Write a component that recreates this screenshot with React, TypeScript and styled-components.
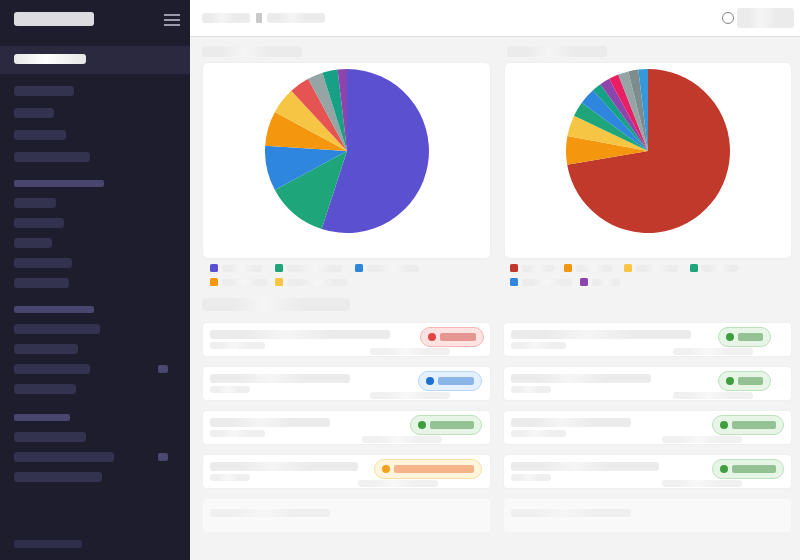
import React from "react";
import styled, { createGlobalStyle, css } from "styled-components";

const Global = createGlobalStyle`
  html, body, #root { margin: 0; padding: 0; height: 100%; }
  body { font-family: Inter, "Liberation Sans", sans-serif; background: #f3f3f3; }
  * { box-sizing: border-box; }
`;

const shimmer = css`
  background: linear-gradient(90deg, #ebebeb 20%, #f5f5f5 42%, #ebebeb 68%);
  border-radius: 3px;
`;

const Shell = styled.div`
  display: flex;
  width: 800px;
  height: 560px;
  overflow: hidden;
`;

/* ---------- Sidebar ---------- */
const Sidebar = styled.aside`
  width: 190px;
  flex-shrink: 0;
  background: #1e1d2e;
  display: flex;
  flex-direction: column;
`;

const Brand = styled.div`
  height: 46px;
  display: flex;
  align-items: flex-start;
  justify-content: space-between;
  padding: 12px 10px 0 14px;
`;

const Logo = styled.div`
  width: 80px;
  height: 14px;
  border-radius: 3px;
  background: #dcdce0;
`;

const Burger = styled.div`
  margin-top: 2px;
  width: 16px;
  display: flex;
  flex-direction: column;
  gap: 3px;
  span {
    display: block;
    height: 2px;
    background: #9b9aa8;
  }
`;

const ActiveRow = styled.div`
  height: 28px;
  background: #2a293f;
  padding: 8px 14px 0;
`;

const ActiveBar = styled.div`
  width: 72px;
  height: 10px;
  border-radius: 3px;
  background: linear-gradient(90deg, #e8e8e8 0%, #ffffff 45%, #e6e6e6 100%);
`;

const NavGroup = styled.div<{ $mt: number; $gap: number }>`
  margin-top: ${(p) => p.$mt}px;
  display: flex;
  flex-direction: column;
  gap: ${(p) => p.$gap}px;
`;

const SectionHead = styled.div<{ $w: number; $mt: number }>`
  width: ${(p) => p.$w}px;
  height: 7px;
  margin: ${(p) => p.$mt}px 0 11px 14px;
  border-radius: 2px;
  background: #48466f;
`;

const NavItemRow = styled.div`
  display: flex;
  align-items: center;
  justify-content: space-between;
  padding: 0 22px 0 14px;
`;

const NavBar = styled.div<{ $w: number }>`
  width: ${(p) => p.$w}px;
  height: 10px;
  border-radius: 3px;
  background: #33324f;
`;

const NavBadge = styled.div`
  width: 10px;
  height: 8px;
  border-radius: 2px;
  background: #4a4870;
`;

const SideFooter = styled.div`
  margin: auto 0 12px 14px;
  width: 68px;
  height: 8px;
  border-radius: 2px;
  background: #2f2e4a;
`;

/* ---------- Main ---------- */
const Main = styled.main`
  flex: 1;
  display: flex;
  flex-direction: column;
  background: #f3f3f3;
  min-width: 0;
`;

const Topbar = styled.header`
  height: 37px;
  flex-shrink: 0;
  background: #ffffff;
  border-bottom: 1px solid #e0e0e0;
  display: flex;
  align-items: center;
  padding: 0 6px 1px 12px;
`;

const Crumb = styled.div<{ $w: number }>`
  ${shimmer}
  width: ${(p) => p.$w}px;
  height: 10px;
`;

const CrumbSep = styled.div`
  width: 6px;
  height: 10px;
  margin: 0 5px 0 6px;
  border-radius: 1px;
  background: #c9c9c9;
`;

const TopRight = styled.div`
  margin-left: auto;
  display: flex;
  align-items: center;
  gap: 3px;
`;

const Ring = styled.div`
  width: 12px;
  height: 12px;
  border-radius: 50%;
  border: 1.5px solid #858585;
`;

const UserBox = styled.div`
  ${shimmer}
  width: 57px;
  height: 20px;
`;

const Content = styled.div`
  display: grid;
  grid-template-columns: 289px 289px;
  column-gap: 12px;
  padding: 9px 8px 0 12px;
  align-items: start;
`;

const Block = styled.section`
  display: flex;
  flex-direction: column;
`;

const BlockTitle = styled.div<{ $w: number; $ml?: number }>`
  ${shimmer}
  width: ${(p) => p.$w}px;
  height: 11px;
  margin-left: ${(p) => p.$ml ?? 0}px;
`;

const ChartCard = styled.div<{ $ml: number }>`
  margin-top: 5px;
  margin-left: ${(p) => p.$ml}px;
  height: 197px;
  background: #ffffff;
  border: 1px solid #efefef;
  border-radius: 6px;
  box-shadow: 0 1px 2px rgba(0, 0, 0, 0.025);
  display: flex;
  justify-content: center;
  padding-top: 6px;
`;

const Legend = styled.div<{ $pl: number }>`
  margin-top: 5px;
  padding-left: ${(p) => p.$pl}px;
  display: flex;
  flex-direction: column;
  gap: 6px;
`;

const LegendRow = styled.div`
  display: flex;
`;

const LegendItem = styled.div<{ $w?: number }>`
  display: flex;
  align-items: center;
  gap: 4px;
  width: ${(p) => (p.$w ? `${p.$w}px` : "auto")};
  flex-shrink: 0;
`;

const Swatch = styled.span<{ $c: string }>`
  width: 8px;
  height: 8px;
  border-radius: 1.5px;
  background: ${(p) => p.$c};
`;

const LegendLabel = styled.span<{ $w: number }>`
  background: linear-gradient(90deg, #ececec 20%, #f6f6f6 50%, #ececec 80%);
  width: ${(p) => p.$w}px;
  height: 7px;
  border-radius: 2px;
`;

const SectionTitle = styled.div`
  ${shimmer}
  margin-top: 12px;
  width: 148px;
  height: 13px;
`;

const List = styled.div`
  margin-top: 11px;
  display: flex;
  flex-direction: column;
  gap: 9px;
`;

const Row = styled.div<{ $faded?: boolean }>`
  height: 35px;
  display: flex;
  align-items: flex-start;
  padding-left: 7px;
  border-radius: 4px;
  border: 1px solid ${(p) => (p.$faded ? "#f3f3f3" : "#efefef")};
  background: ${(p) => (p.$faded ? "#f9f9f9" : "#ffffff")};
`;

const Info = styled.div<{ $pt?: number }>`
  flex: 1;
  min-width: 0;
  display: flex;
  flex-direction: column;
  gap: 3px;
  padding-top: ${(p) => p.$pt ?? 7}px;
`;

const RowTitle = styled.div<{ $w: number; $faded?: boolean }>`
  ${shimmer}
  ${(p) =>
    p.$faded &&
    css`
      background: linear-gradient(90deg, #f0f0f0 20%, #f6f6f6 45%, #efefef 70%);
    `}
  width: ${(p) => p.$w}px;
  height: ${(p) => (p.$faded ? 8 : 9)}px;
  flex-shrink: 0;
`;

const RowSub = styled.div<{ $w: number }>`
  background: linear-gradient(90deg, #efefef 20%, #f7f7f7 45%, #efefef 70%);
  border-radius: 3px;
  width: ${(p) => p.$w}px;
  height: 7px;
`;

const Side = styled.div`
  display: flex;
  flex-direction: column;
  align-items: flex-end;
  padding-top: 4px;
`;

const tones = {
  red: { bg: "#fde2e2", border: "#f6b6b6", dot: "#e04646", bar: "#e59690" },
  blue: { bg: "#e4f0fd", border: "#b8d6f5", dot: "#1e6fd2", bar: "#8bb5e6" },
  green: { bg: "#e7f5e7", border: "#bde0bd", dot: "#3f9f3f", bar: "#94c294" },
  orange: { bg: "#fff5dc", border: "#f6e0a4", dot: "#f4a11e", bar: "#f5b489" },
};
type Tone = keyof typeof tones;

const Badge = styled.div<{ $tone: Tone; $mr: number }>`
  height: 20px;
  margin-right: ${(p) => p.$mr}px;
  padding: 0 7px;
  display: flex;
  align-items: center;
  gap: 4px;
  border-radius: 10px;
  background: ${(p) => tones[p.$tone].bg};
  border: 1px solid ${(p) => tones[p.$tone].border};
`;

const Dot = styled.span<{ $tone: Tone }>`
  width: 8px;
  height: 8px;
  border-radius: 50%;
  background: ${(p) => tones[p.$tone].dot};
`;

const BadgeBar = styled.span<{ $tone: Tone; $w: number }>`
  width: ${(p) => p.$w}px;
  height: 8px;
  border-radius: 2px;
  background: ${(p) => tones[p.$tone].bar};
`;

const DateBar = styled.div<{ $mr: number }>`
  background: linear-gradient(90deg, #f0f0f0 20%, #f8f8f8 45%, #f0f0f0 70%);
  border-radius: 3px;
  margin-top: 1px;
  margin-right: ${(p) => p.$mr}px;
  width: 80px;
  height: 7px;
`;

/* ---------- Pie ---------- */
type Slice = { deg: number; color: string };

function Pie({ slices }: { slices: Slice[] }) {
  const c = 82;
  const r = 82;
  let acc = 0;
  const pt = (a: number) => {
    const rad = (a * Math.PI) / 180;
    return [c + r * Math.sin(rad), c - r * Math.cos(rad)];
  };
  return (
    <svg width={164} height={164} viewBox="0 0 164 164">
      {slices.map((s, i) => {
        const a0 = acc;
        const a1 = acc + s.deg;
        acc = a1;
        const [x0, y0] = pt(a0);
        const [x1, y1] = pt(a1);
        const large = s.deg > 180 ? 1 : 0;
        return (
          <path
            key={i}
            d={`M${c} ${c} L${x0.toFixed(2)} ${y0.toFixed(2)} A${r} ${r} 0 ${large} 1 ${x1.toFixed(2)} ${y1.toFixed(2)} Z`}
            fill={s.color}
          />
        );
      })}
    </svg>
  );
}

const pieA: Slice[] = [
  { deg: 198, color: "#5b50cf" },
  { deg: 43.6, color: "#1fa57a" },
  { deg: 32.1, color: "#2e86de" },
  { deg: 24.7, color: "#f5960f" },
  { deg: 18.8, color: "#f6c544" },
  { deg: 14.5, color: "#e55353" },
  { deg: 10.9, color: "#95a5a6" },
  { deg: 10.8, color: "#16a085" },
  { deg: 6.6, color: "#8e44ad" },
];

const pieB: Slice[] = [
  { deg: 260.3, color: "#c0392b" },
  { deg: 20.3, color: "#f5960f" },
  { deg: 14.9, color: "#f6c544" },
  { deg: 10.6, color: "#1fa57a" },
  { deg: 11.7, color: "#2e86de" },
  { deg: 6.7, color: "#16a085" },
  { deg: 7.2, color: "#8e44ad" },
  { deg: 7.0, color: "#e91e63" },
  { deg: 7.4, color: "#95a5a6" },
  { deg: 7.1, color: "#7f8c8d" },
  { deg: 6.8, color: "#3498db" },
];

type LegendDef = { c: string; w: number; iw?: number }[][];

const legendA: LegendDef = [
  [
    { c: "#5b50cf", w: 40, iw: 65 },
    { c: "#1fa57a", w: 55, iw: 80 },
    { c: "#2e86de", w: 52 },
  ],
  [
    { c: "#f5960f", w: 45, iw: 65 },
    { c: "#f6c544", w: 60 },
  ],
];

const legendB: LegendDef = [
  [
    { c: "#c0392b", w: 32, iw: 54 },
    { c: "#f5960f", w: 36, iw: 60 },
    { c: "#f6c544", w: 42, iw: 66 },
    { c: "#1fa57a", w: 36 },
  ],
  [
    { c: "#2e86de", w: 50, iw: 70 },
    { c: "#8e44ad", w: 28 },
  ],
];

type RowDef = {
  title: number;
  sub: number;
  tone: Tone;
  bar: number;
  bmr: number;
  dmr: number;
};

const rowsA: RowDef[] = [
  { title: 180, sub: 55, tone: "red", bar: 36, bmr: 6, dmr: 40 },
  { title: 140, sub: 40, tone: "blue", bar: 36, bmr: 8, dmr: 40 },
  { title: 120, sub: 55, tone: "green", bar: 44, bmr: 8, dmr: 48 },
  { title: 148, sub: 40, tone: "orange", bar: 80, bmr: 8, dmr: 52 },
];

const rowsB: RowDef[] = [
  { title: 180, sub: 55, tone: "green", bar: 25, bmr: 20, dmr: 38 },
  { title: 140, sub: 40, tone: "green", bar: 25, bmr: 20, dmr: 38 },
  { title: 120, sub: 55, tone: "green", bar: 44, bmr: 7, dmr: 49 },
  { title: 148, sub: 40, tone: "green", bar: 44, bmr: 7, dmr: 49 },
];

function ChartBlock({
  slices,
  legend,
  titleMl,
  cardMl,
  legendPl,
}: {
  slices: Slice[];
  legend: LegendDef;
  titleMl: number;
  cardMl: number;
  legendPl: number;
}) {
  return (
    <Block>
      <BlockTitle $w={100} $ml={titleMl} />
      <ChartCard $ml={cardMl}>
        <Pie slices={slices} />
      </ChartCard>
      <Legend $pl={legendPl}>
        {legend.map((row, i) => (
          <LegendRow key={i}>
            {row.map((it, j) => (
              <LegendItem key={j} $w={it.iw}>
                <Swatch $c={it.c} />
                <LegendLabel $w={it.w} />
              </LegendItem>
            ))}
          </LegendRow>
        ))}
      </Legend>
    </Block>
  );
}

function StatusList({ rows }: { rows: RowDef[] }) {
  return (
    <List>
      {rows.map((r, i) => (
        <Row key={i}>
          <Info>
            <RowTitle $w={r.title} />
            <RowSub $w={r.sub} />
          </Info>
          <Side>
            <Badge $tone={r.tone} $mr={r.bmr}>
              <Dot $tone={r.tone} />
              <BadgeBar $tone={r.tone} $w={r.bar} />
            </Badge>
            <DateBar $mr={r.dmr} />
          </Side>
        </Row>
      ))}
      <Row $faded>
        <Info $pt={10}>
          <RowTitle $w={120} $faded />
        </Info>
      </Row>
    </List>
  );
}

type NavDef = { w: number; badge?: boolean };

function NavItems({ items, mt, gap }: { items: NavDef[]; mt: number; gap: number }) {
  return (
    <NavGroup $mt={mt} $gap={gap}>
      {items.map((it, i) => (
        <NavItemRow key={i}>
          <NavBar $w={it.w} />
          {it.badge && <NavBadge />}
        </NavItemRow>
      ))}
    </NavGroup>
  );
}

export default function App() {
  return (
    <>
      <Global />
      <Shell>
        <Sidebar>
          <Brand>
            <Logo />
            <Burger>
              <span />
              <span />
              <span />
            </Burger>
          </Brand>
          <ActiveRow>
            <ActiveBar />
          </ActiveRow>
          <NavItems mt={12} gap={12} items={[{ w: 60 }, { w: 40 }, { w: 52 }, { w: 76 }]} />
          <SectionHead $w={90} $mt={18} />
          <NavItems mt={0} gap={10} items={[{ w: 42 }, { w: 50 }, { w: 38 }, { w: 58 }, { w: 55 }]} />
          <SectionHead $w={80} $mt={18} />
          <NavItems mt={0} gap={10} items={[{ w: 86 }, { w: 64 }, { w: 76, badge: true }, { w: 62 }]} />
          <SectionHead $w={56} $mt={20} />
          <NavItems mt={0} gap={10} items={[{ w: 72 }, { w: 100, badge: true }, { w: 88 }]} />
          <SideFooter />
        </Sidebar>
        <Main>
          <Topbar>
            <Crumb $w={48} />
            <CrumbSep />
            <Crumb $w={58} />
            <TopRight>
              <Ring />
              <UserBox />
            </TopRight>
          </Topbar>
          <Content>
            <ChartBlock slices={pieA} legend={legendA} titleMl={0} cardMl={0} legendPl={8} />
            <ChartBlock slices={pieB} legend={legendB} titleMl={4} cardMl={1} legendPl={7} />
            <SectionTitle />
            <div />
            <StatusList rows={rowsA} />
            <StatusList rows={rowsB} />
          </Content>
        </Main>
      </Shell>
    </>
  );
}
